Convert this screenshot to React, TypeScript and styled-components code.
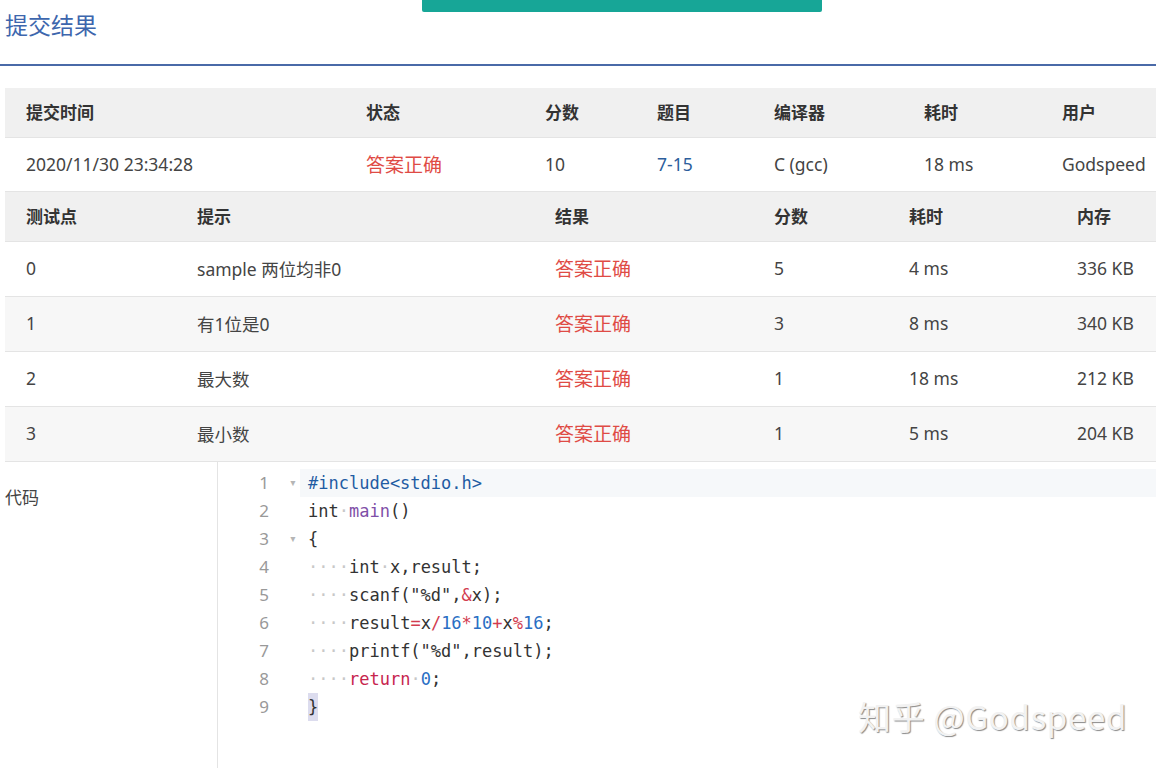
import React from "react";
import styled, { createGlobalStyle } from "styled-components";

const GlobalStyle = createGlobalStyle`
  html, body {
    margin: 0;
    padding: 0;
    background: #fff;
  }
  body {
    font-family: "Noto Sans", "Noto Sans CJK SC", sans-serif;
    color: #333;
    overflow: hidden;
  }
`;

const palette = {
  blue: "#3d66ad",
  line: "#4a6aa8",
  red: "#df4b45",
  link: "#2c5e9c",
  headerBg: "#f0f0f0",
  stripe: "#f7f7f7",
  border: "#e4e4e4",
};

const summaryCols = [340, 179, 112, 117, 150, 138, 140];
const caseCols = [171, 358, 219, 135, 168, 120];

const summaryHeader = ["提交时间", "状态", "分数", "题目", "编译器", "耗时", "用户"];
const caseHeader = ["测试点", "提示", "结果", "分数", "耗时", "内存"];

const cases = [
  ["0", "sample 两位均非0", "答案正确", "5", "4 ms", "336 KB"],
  ["1", "有1位是0", "答案正确", "3", "8 ms", "340 KB"],
  ["2", "最大数", "答案正确", "1", "18 ms", "212 KB"],
  ["3", "最小数", "答案正确", "1", "5 ms", "204 KB"],
];

type Tok = { t: string; c?: "kw" | "fn" | "op" | "num" | "pre" | "ws" | "brace" };

const code: Tok[][] = [
  [{ t: "#include<stdio.h>", c: "pre" }],
  [{ t: "int" }, { t: "·", c: "ws" }, { t: "main", c: "fn" }, { t: "()" }],
  [{ t: "{" }],
  [{ t: "····", c: "ws" }, { t: "int" }, { t: "·", c: "ws" }, { t: "x,result;" }],
  [
    { t: "····", c: "ws" },
    { t: 'scanf("%d",' },
    { t: "&", c: "op" },
    { t: "x);" },
  ],
  [
    { t: "····", c: "ws" },
    { t: "result" },
    { t: "=", c: "op" },
    { t: "x" },
    { t: "/", c: "op" },
    { t: "16", c: "num" },
    { t: "*", c: "op" },
    { t: "10", c: "num" },
    { t: "+", c: "op" },
    { t: "x" },
    { t: "%", c: "op" },
    { t: "16", c: "num" },
    { t: ";" },
  ],
  [{ t: "····", c: "ws" }, { t: 'printf("%d",result);' }],
  [
    { t: "····", c: "ws" },
    { t: "return", c: "kw" },
    { t: "·", c: "ws" },
    { t: "0", c: "num" },
    { t: ";" },
  ],
  [{ t: "}", c: "brace" }],
];

const tokColor: Record<string, string> = {
  kw: "#c7254e",
  fn: "#7f4fa8",
  op: "#d23c4f",
  num: "#2a6fc4",
  pre: "#1f5ca3",
  ws: "#c8c8c8",
  brace: "#333",
};

export default function App() {
  return (
    <Page>
      <GlobalStyle />
      <Toast />
      <TitleBar>
        <Title>提交结果</Title>
      </TitleBar>

      <Table>
        <HeaderRow cols={summaryCols}>
          {summaryHeader.map((h) => (
            <Cell key={h}>{h}</Cell>
          ))}
        </HeaderRow>
        <Row cols={summaryCols} tall={54}>
          <Cell>2020/11/30 23:34:28</Cell>
          <Cell tone="red">答案正确</Cell>
          <Cell>10</Cell>
          <Cell tone="link">7-15</Cell>
          <Cell>C (gcc)</Cell>
          <Cell>18 ms</Cell>
          <Cell>Godspeed</Cell>
        </Row>
      </Table>

      <Table>
        <HeaderRow cols={caseCols}>
          {caseHeader.map((h) => (
            <Cell key={h}>{h}</Cell>
          ))}
        </HeaderRow>
        {cases.map((r, i) => (
          <Row key={r[0]} cols={caseCols} tall={55} striped={i % 2 === 1}>
            {r.map((v, j) => (
              <Cell key={j} tone={j === 2 ? "red" : undefined}>
                {v}
              </Cell>
            ))}
          </Row>
        ))}
      </Table>

      <CodeSection>
        <CodeLabel>代码</CodeLabel>
        <Editor>
          {code.map((line, i) => (
            <CodeLine key={i} active={i === 0}>
              <Gutter>
                <LineNo>{i + 1}</LineNo>
                <Fold>{i === 0 || i === 2 ? "▾" : ""}</Fold>
              </Gutter>
              <LineText>
                {line.map((tk, k) =>
                  tk.c === "brace" ? (
                    <BraceMatch key={k}>{tk.t}</BraceMatch>
                  ) : (
                    <Tk key={k} color={tk.c ? tokColor[tk.c] : "#333"}>
                      {tk.t}
                    </Tk>
                  )
                )}
              </LineText>
            </CodeLine>
          ))}
        </Editor>
      </CodeSection>

      <Watermark>知乎 @Godspeed</Watermark>
    </Page>
  );
}

const Page = styled.div`
  position: relative;
  width: 1156px;
  height: 768px;
  overflow: hidden;
`;

const Toast = styled.div`
  position: absolute;
  left: 422px;
  top: 0;
  width: 400px;
  height: 12px;
  background: #17a697;
  border-radius: 0 0 2px 2px;
`;

const TitleBar = styled.div`
  height: 64px;
  border-bottom: 2px solid ${palette.line};
  padding-left: 5px;
  margin-bottom: 22px;
`;

const Title = styled.h1`
  margin: 0;
  padding-top: 9px;
  font-size: 23px;
  font-weight: 400;
  line-height: 32px;
  color: ${palette.blue};
`;

const Table = styled.div`
  margin-left: 5px;
  width: 1151px;
`;

const HeaderRow = styled.div<{ cols: number[] }>`
  display: grid;
  grid-template-columns: ${(p) => p.cols.map((c) => `${c}px`).join(" ")};
  height: 50px;
  padding-bottom: 2px;
  box-sizing: border-box;
  align-items: center;
  background: ${palette.headerBg};
  border-bottom: 1px solid ${palette.border};
  font-weight: 700;
  font-size: 17px;
  color: #333;
`;

const Row = styled.div<{ cols: number[]; tall: number; striped?: boolean }>`
  display: grid;
  grid-template-columns: ${(p) => p.cols.map((c) => `${c}px`).join(" ")};
  height: ${(p) => p.tall}px;
  padding-bottom: 2px;
  box-sizing: border-box;
  align-items: center;
  background: ${(p) => (p.striped ? palette.stripe : "#fff")};
  border-bottom: 1px solid ${palette.border};
  font-size: 17.5px;
  color: #444;
`;

const Cell = styled.div<{ tone?: "red" | "link" }>`
  padding-left: 21px;
  white-space: nowrap;
  color: ${(p) =>
    p.tone === "red" ? palette.red : p.tone === "link" ? palette.link : "inherit"};
  font-size: ${(p) => (p.tone === "red" ? "19px" : "inherit")};
`;

const CodeSection = styled.div`
  display: flex;
  height: 306px;
  margin-left: 5px;
`;

const CodeLabel = styled.div`
  width: 212px;
  padding-top: 22px;
  font-size: 17px;
  color: #444;
  border-right: 1px solid ${palette.border};
`;

const Editor = styled.div`
  flex: 1;
  padding-top: 7px;
  font-family: "DejaVu Sans Mono", "Liberation Mono", monospace;
  font-size: 17px;
`;

const CodeLine = styled.div<{ active?: boolean }>`
  display: flex;
  height: 28px;
  line-height: 28px;
  background: ${(p) =>
    p.active ? "linear-gradient(to right, #fff 82px, #f6f8fa 82px)" : "transparent"};
`;

const Gutter = styled.div`
  width: 82px;
  display: flex;
  color: #999;
  flex-shrink: 0;
`;

const LineNo = styled.span`
  width: 51px;
  text-align: right;
  font-family: "Noto Sans", sans-serif;
  font-size: 17px;
`;

const Fold = styled.span`
  width: 31px;
  padding-left: 20px;
  box-sizing: border-box;
  font-size: 13px;
  color: #b5b5b5;
`;

const LineText = styled.div`
  padding-left: 8px;
  white-space: pre;
`;

const Tk = styled.span<{ color: string }>`
  color: ${(p) => p.color};
`;

const BraceMatch = styled.span`
  display: inline-block;
  height: 28px;
  background: #dcdcee;
  color: #333;
`;

const Watermark = styled.div`
  position: absolute;
  left: 858px;
  top: 692px;
  font-family: "Noto Sans CJK SC", "Noto Sans", sans-serif;
  font-size: 33px;
  color: #f2f2f2;
  text-shadow: 1px 1px 1px #8a8a8a;
  letter-spacing: 0.7px;
`;
